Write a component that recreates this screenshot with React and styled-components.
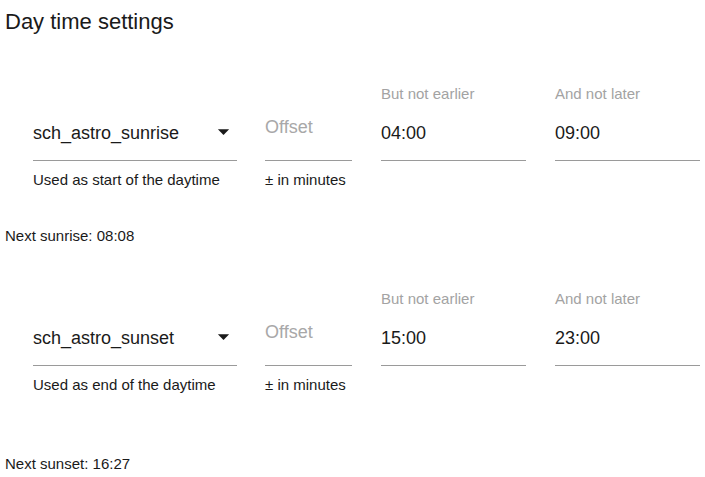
import React from 'react';
import styled, { createGlobalStyle } from 'styled-components';

const GlobalStyle = createGlobalStyle`
  body {
    margin: 0;
    background: #fff;
    font-family: "Liberation Sans", Arial, sans-serif;
    color: #1a1a1a;
  }
`;

const Page = styled.div`
  padding: 9px 5px 0 5px;
`;

const Title = styled.div`
  font-size: 22px;
  line-height: 25px;
`;

const Row = styled.div`
  display: flex;
  padding-left: 28px;
  margin-top: ${({ top }) => top}px;
`;

const Field = styled.div`
  display: flex;
  flex-direction: column;
  width: ${({ w }) => w}px;
  margin-right: ${({ gap }) => gap || 0}px;
`;

const Label = styled.div`
  height: 17px;
  font-size: 15px;
  line-height: 17px;
  color: #a3a3a3;
  white-space: nowrap;
`;

const InputArea = styled.div`
  position: relative;
  border-bottom: 1px solid #9a9a9a;
  padding-top: ${({ pt }) => pt}px;
  height: ${({ pt }) => 58 - pt}px;
`;

const Value = styled.div`
  font-size: 18px;
  line-height: 21px;
  color: ${({ placeholder }) => (placeholder ? '#a8a8a8' : '#1a1a1a')};
  white-space: nowrap;
`;

const Arrow = styled.svg`
  position: absolute;
  right: 0;
  top: 16px;
  width: 27px;
  height: 27px;
`;

const Helper = styled.div`
  margin-top: 10px;
  font-size: 15px;
  line-height: 17px;
  white-space: nowrap;
`;

const NextTime = styled.div`
  font-size: 15px;
  line-height: 17px;
  margin-top: ${({ top }) => top}px;
`;

const DropIcon = () => (
  <Arrow viewBox="0 0 24 24">
    <path d="M7 10l5 5 5-5z" fill="#1a1a1a" />
  </Arrow>
);

const TimeRow = ({ top, event, helper, earlier, later }) => (
  <Row top={top}>
    <Field w={204} gap={28}>
      <Label />
      <InputArea pt={21}>
        <Value>{event}</Value>
        <DropIcon />
      </InputArea>
      <Helper>{helper}</Helper>
    </Field>
    <Field w={87} gap={29}>
      <Label />
      <InputArea pt={15}>
        <Value placeholder>Offset</Value>
      </InputArea>
      <Helper>± in minutes</Helper>
    </Field>
    <Field w={145} gap={29}>
      <Label>But not earlier</Label>
      <InputArea pt={21}>
        <Value>{earlier}</Value>
      </InputArea>
    </Field>
    <Field w={145}>
      <Label>And not later</Label>
      <InputArea pt={21}>
        <Value>{later}</Value>
      </InputArea>
    </Field>
  </Row>
);

export default function App() {
  return (
    <>
      <GlobalStyle />
      <Page>
        <Title>Day time settings</Title>
        <TimeRow
          top={51}
          event="sch_astro_sunrise"
          helper="Used as start of the daytime"
          earlier="04:00"
          later="09:00"
        />
        <NextTime top={39}>Next sunrise: 08:08</NextTime>
        <TimeRow
          top={46}
          event="sch_astro_sunset"
          helper="Used as end of the daytime"
          earlier="15:00"
          later="23:00"
        />
        <NextTime top={62}>Next sunset: 16:27</NextTime>
      </Page>
    </>
  );
}
